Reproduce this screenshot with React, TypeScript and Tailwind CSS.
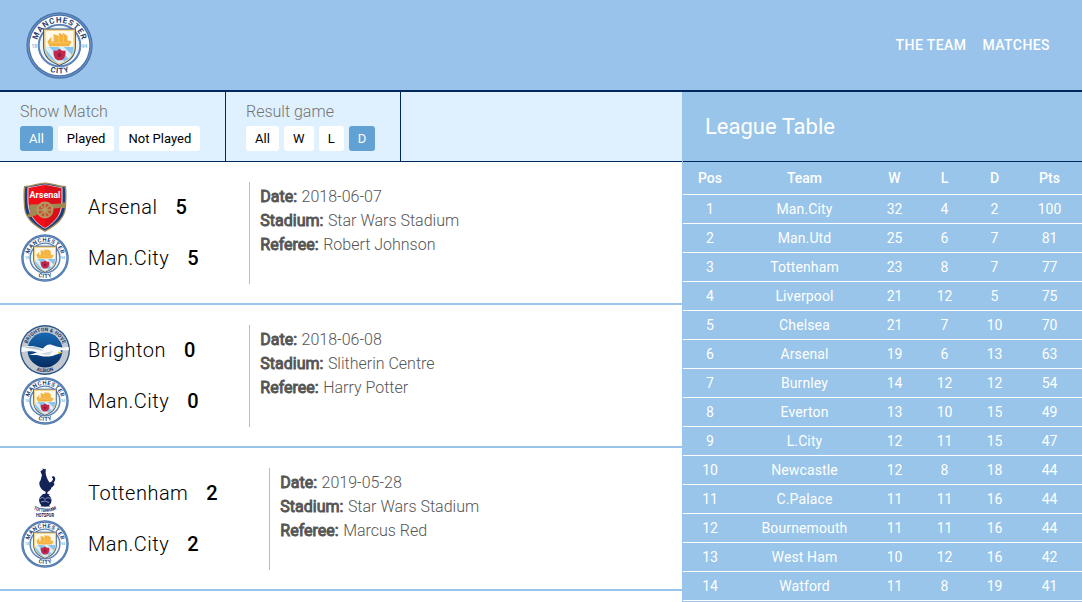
import React, { useId } from "react";

const NAVY = "#2b3f73";

function CityCrest({ className }: { className: string }) {
  const id = useId();
  return (
    <svg viewBox="0 0 100 100" className={className}>
      <defs>
        <path id={id + "t"} d="M 16 50 A 34 34 0 0 1 84 50" />
        <path id={id + "b"} d="M 8.500 50 A 41.500 41.500 0 0 0 91.500 50" />
        <clipPath id={id + "c"}>
          <path d="M29 28 H71 V52 C71 66 62 73 50 77 C38 73 29 66 29 52 Z" />
        </clipPath>
      </defs>
      <circle cx="50" cy="50" r="49.5" fill="#4a73ab" />
      <circle cx="50" cy="50" r="47" fill="none" stroke="#8fb2d8" strokeWidth="0.8" />
      <circle cx="50" cy="50" r="44.5" fill="#fff" />
      <circle cx="50" cy="50" r="31" fill="#eaf4fb" stroke="#5f83b4" strokeWidth="3" />
      <path d="M25.500 24.500 H74.500 V52 C74.500 68 63 76 50 80.500 C37 76 25.500 68 25.500 52 Z" fill="#375784" />
      <path d="M27 26 H73 V52 C73 67 62 74.500 50 79 C38 74.500 27 67 27 52 Z" fill="#f4d183" />
      <g clipPath={`url(#${id}c)`}>
        <rect x="28" y="28" width="44" height="25" fill="#fff9ea" />
        <rect x="28" y="52" width="44" height="28" fill="#89c5ec" />
        <path d="M26 52 L34 52 L61 78 L50 80 Z M48 52 H56 L74 69 L68 75 Z" fill="#dceffb" />
        <path d="M32 44 L38 37 V44 H41 V33 L49 36 V31 L55 34 V31 L62 36 V43 H66 L68 45 L64 51 H35 Z" fill="#f4b13c" />
        <path d="M42 35 V44 M49 34 V46 M56 34 V45 M34 46 H65" fill="none" stroke="#fbd78a" strokeWidth="0.8" />
        <path d="M50 55 L54 58 L59 58 L59 63 L57 69 L53 72 H47 L43 69 L41 63 L41 58 L46 58 Z" fill="#c4274b" />
        <path d="M50 61 L53 63 L52 67 H48 L47 63 Z" fill="#8e1c40" />
      </g>
      <g fill={NAVY} fontFamily="Roboto, sans-serif" fontWeight="700" textAnchor="middle">
        <text fontSize="12">
          <textPath href={`#${id}t`} startOffset="50%" textLength="90">MANCHESTER</textPath>
        </text>
        <text fontSize="11.5">
          <textPath href={`#${id}b`} startOffset="50%" textLength="29">CITY</textPath>
        </text>
      </g>
      <g fill="#83bee8" fontFamily="Roboto, sans-serif" fontWeight="700" fontSize="7.500" textAnchor="middle">
        <text x="12.500" y="53">18</text>
        <text x="87.500" y="53">94</text>
      </g>
    </svg>
  );
}

function ArsenalCrest() {
  return (
    <svg viewBox="0 0 50 50" className="block size-[50px]">
      <path d="M4 4 C11 4 17 .8 25 .5 C33 .8 39 4 46 4 C47 10 46.500 18 46 26 C45 37 36 44 25 50 C14 44 5 37 4 26 C3.500 18 3 10 4 4Z" fill="#a68f5c" />
      <path d="M5.300 5.300 C12 5 18 2 25 1.700 C32 2 38 5 44.700 5.300 C45.500 12 45.300 19 44.800 26 C44 36 35 43 25 48.500 C15 43 6 36 5.200 26 C4.700 19 4.500 12 5.300 5.300Z" fill="#1c3f7c" />
      <path d="M7.500 5.500 C14 5 19 2.700 25 2.500 C31 2.700 36 5 42.500 5.500 C42.500 16 43 23 41 29 C38.500 37 32 42.500 25 46.800 C18 42.500 11.500 37 9 29 C7 23 7.500 16 7.500 5.500Z" fill="#f7dfe2" />
      <path d="M8.500 6 C14 5.500 19 3.300 25 3 V46 C18 42 12 36.500 10 29 C8 23 8.500 16 8.500 6Z" fill="#f20d17" />
      <path d="M41.500 6 C36 5.500 31 3.300 25 3 V46 C32 42 38 36.500 40 29 C42 23 41.500 16 41.500 6Z" fill="#d9101a" />
      <text x="25" y="15.800" textAnchor="middle" textLength="31" lengthAdjust="spacingAndGlyphs" fill="#fff" fontFamily="Roboto, sans-serif" fontWeight="700" fontSize="9.500">
        Arsenal
      </text>
      <path d="M10 22.500 L31 22 L42 21.500 V20.500 H46 V26 H42 V25.500 L31 27 L14 34 L8.500 35.500 L7 33 L11 30.500 L8.500 26Z" fill="#a08852" />
      <circle cx="25" cy="28" r="7.500" fill="#c4552f" stroke="#b49b65" strokeWidth="1.900" />
      <path d="M17 28 H33 M25 20 V36 M19.300 22.300 L30.700 33.700 M30.700 22.300 L19.300 33.700" stroke="#b49b65" strokeWidth="1.500" />
      <circle cx="25" cy="28" r="2.500" fill="#b49b65" />
    </svg>
  );
}

function BrightonCrest() {
  const id = useId();
  return (
    <svg viewBox="0 0 50 50" className="block size-[50px]">
      <defs>
        <path id={id + "t"} d="M 6.200 25 A 18.800 18.800 0 0 1 43.800 25" />
        <path id={id + "b"} d="M 2.800 25 A 22.200 22.200 0 0 0 47.200 25" />
        <linearGradient id={id + "g"} x1="0" y1="0" x2="0" y2="1">
          <stop offset="0" stopColor="#1668b2" />
          <stop offset="1" stopColor="#052d62" />
        </linearGradient>
      </defs>
      <circle cx="25" cy="25" r="25" fill="#2c568a" />
      <circle cx="25" cy="25" r="23.600" fill="#c2c8ce" />
      <circle cx="25" cy="25" r="17.500" fill={`url(#${id}g)`} />
      <path d="M1.500 22.500 C6 21 12 20.500 17 22 L23 23.500 C26 20.500 28 18.800 32 20 C35 21 38 22 42 22.500 L48.800 22 V25.500 C45 25 43 25 40 25.500 L42 27.500 L38 29 C34 30 33 31.500 27 31.500 C21 32 19 30 16 30 L9 30 L17 27.500 C12 25.500 6 26.500 1.500 27Z" fill="#f7fafc" />
      <path d="M4 22.500 C11 20.500 17 21.500 24 26 L11 23.500 Z" fill="#b5c3cf" />
      <path d="M20 29 L33 26 L29 30Z" fill="#cdd7de" />
      <path d="M38 26.500 L42.500 27.500 L38 28.800Z" fill="#e9c735" />
      <g fill="#123a70" fontFamily="Roboto, sans-serif" fontWeight="700" fontSize="5" textAnchor="middle">
        <text>
          <textPath href={`#${id}t`} startOffset="50%" textLength="46">BRIGHTON &amp; HOVE</textPath>
        </text>
        <text>
          <textPath href={`#${id}b`} startOffset="50%">ALBION</textPath>
        </text>
      </g>
    </svg>
  );
}

function TottenhamCrest() {
  return (
    <svg viewBox="0 0 50 50" className="block size-[50px]">
      <g fill="#132257">
        <path d="M20.500 3.300 L23 1.500 L22.300 .2 L24.500 1.300 L25.800 .8 L25.600 5 C25.800 8 27.500 11.500 29.500 14.500 C31.500 14 33 12.500 33 10.500 C31.800 9.800 31.600 8.700 32.500 8.400 C34.200 7.800 36.500 10 34.500 13.500 L33.500 14.500 C35.500 16 33.500 18.500 31.500 19.500 C31 21.500 29 23 27.500 24 L27.200 26.500 H25.700 L25.500 23.500 C22 22.500 19.200 19 19.300 14.500 L20.700 12 L22 7 L21 5Z" />
        <path d="M22 26.500 L26 25.500 L30 26.500 L27.500 27.500 H24Z" />
        <circle cx="25.300" cy="32.300" r="6.200" />
        <path d="M22.500 35.500 H28 L30 38.500 H20.500Z" />
      </g>
      <path d="M20 31 C22 28.500 24 29.500 25 31.500 C26.500 29 29 29.500 31 31 M21 34 L25 33 L29 34.500" fill="none" stroke="#a9b5cf" strokeWidth=".8" />
      <g fill="#132257" fontFamily="Roboto, sans-serif" fontWeight="700" fontSize="4.800" textAnchor="middle">
        <path id="spurs-arc" d="M13 41 Q25 47 37 41" fill="none" />
        <text>
          <textPath href="#spurs-arc" startOffset="50%" textLength="24" lengthAdjust="spacingAndGlyphs">TOTTENHAM</textPath>
        </text>
        <text x="25" y="49" textLength="18" lengthAdjust="spacingAndGlyphs">HOTSPUR</text>
      </g>
    </svg>
  );
}

const tagBase = "h-[25px] rounded-[3px] px-[9px] text-[13px] leading-[25px]";

function Tags({ title, items, active, className, gap }: { title: string; items: string[]; active: string; className: string; gap: string }) {
  return (
    <div className={`border-r border-[#00285e] pl-5 pt-[7px] ${className}`}>
      <div className="h-[27px] text-[16px] leading-[25px] font-light text-[#737373]">{title}</div>
      <div className={`flex ${gap}`}>
        {items.map((t) => (
          <button key={t} className={`${tagBase} ${t === active ? "bg-[#62a1d4] text-white" : "bg-white text-black"}`}>
            {t}
          </button>
        ))}
      </div>
    </div>
  );
}

function Side({ crest, name, score }: { crest: React.ReactNode; name: string; score: number }) {
  return (
    <div className="flex h-[51px] items-center text-[20px] text-black">
      <div className="flex w-[50px] justify-center">{crest}</div>
      <span className="ml-[18px] font-light tracking-[0.5px]">{name}</span>
      <span className="ml-[18px] font-medium">{score}</span>
    </div>
  );
}

type Match = { crest: React.ReactNode; name: string; score: number; date: string; stadium: string; referee: string; width: string };

const matches: Match[] = [
  { crest: <ArsenalCrest />, name: "Arsenal", score: 5, date: "2018-06-07", stadium: "Star Wars Stadium", referee: "Robert Johnson", width: "w-[229px]" },
  { crest: <BrightonCrest />, name: "Brighton", score: 0, date: "2018-06-08", stadium: "Slitherin Centre", referee: "Harry Potter", width: "w-[229px]" },
  { crest: <TottenhamCrest />, name: "Tottenham", score: 2, date: "2019-05-28", stadium: "Star Wars Stadium", referee: "Marcus Red", width: "w-[249px]" },
];

function Detail({ label, value }: { label: string; value: string }) {
  return (
    <div>
      <b className="mr-[0.6px] font-normal [-webkit-text-stroke:0.9px_#555]">{label}:</b> {value}
    </div>
  );
}

const table: [string, number, number, number, number][] = [
  ["Man.City", 32, 4, 2, 100],
  ["Man.Utd", 25, 6, 7, 81],
  ["Tottenham", 23, 8, 7, 77],
  ["Liverpool", 21, 12, 5, 75],
  ["Chelsea", 21, 7, 10, 70],
  ["Arsenal", 19, 6, 13, 63],
  ["Burnley", 14, 12, 12, 54],
  ["Everton", 13, 10, 15, 49],
  ["L.City", 12, 11, 15, 47],
  ["Newcastle", 12, 8, 18, 44],
  ["C.Palace", 11, 11, 16, 44],
  ["Bournemouth", 11, 11, 16, 44],
  ["West Ham", 10, 12, 16, 42],
  ["Watford", 11, 8, 19, 41],
];

const cols = "grid grid-cols-[54px_135px_45px_55px_45px_65px] border-b border-white text-center text-[14px] text-white";

export default function App() {
  return (
    <div className="flex h-[602px] w-[1082px] flex-col overflow-hidden bg-white font-[Roboto,sans-serif]">
      <header className="flex h-[92px] shrink-0 items-center justify-between border-b-2 border-[#00285e] bg-[#99c3ea] pr-8 pl-[25.500px]">
        <CityCrest className="block size-[67px]" />
        <nav className="flex gap-4 text-[14px] font-medium tracking-[0.42px] text-white">
          <a>THE TEAM</a>
          <a>MATCHES</a>
        </nav>
      </header>
      <div className="flex min-h-0 flex-1">
        <main className="w-[682px]">
          <div className="flex h-[70px] border-b border-[#00285e] bg-[#dff0ff]">
            <Tags title="Show Match" items={["All", "Played", "Not Played"]} active="All" gap="gap-[5px]" className="w-[226px]" />
            <Tags title="Result game" items={["All", "W", "L", "D"]} active="D" gap="gap-[5.150px]" className="w-[175px]" />
          </div>
          {matches.map((m) => (
            <section key={m.name} className="flex h-[143px] border-b-2 border-[#98c5e9] pt-[19px] pl-5">
              <div className={m.width}>
                <Side crest={m.crest} name={m.name} score={m.score} />
                <Side crest={<CityCrest className="block size-[48px]" />} name="Man.City" score={m.score} />
              </div>
              <div className="mt-px h-[102px] border-l border-[#98c5e9] pt-[3px] pl-[10.300px] text-[16px] leading-6 font-light text-[#555]">
                <Detail label="Date" value={m.date} />
                <Detail label="Stadium" value={m.stadium} />
                <Detail label="Referee" value={m.referee} />
              </div>
            </section>
          ))}
        </main>
        <aside className="w-[400px] border-l border-[#98c5e9] bg-[#98c5e9]">
          <h2 className="h-[70px] border-b border-[#00285e] pl-[22px] text-[22px] leading-[69px] text-white">League Table</h2>
          <div className={`${cols} h-[33px] leading-[32px] font-medium`}>
            {["Pos", "Team", "W", "L", "D", "Pts"].map((h) => (
              <span key={h}>{h}</span>
            ))}
          </div>
          {table.map((row, i) => (
            <div key={row[0]} className={`${cols} h-[29px] leading-[28px]`}>
              <span>{i + 1}</span>
              {row.map((v, j) => (
                <span key={j} className={j === 0 ? "tracking-[0.12px]" : ""}>{v}</span>
              ))}
            </div>
          ))}
        </aside>
      </div>
    </div>
  );
}
